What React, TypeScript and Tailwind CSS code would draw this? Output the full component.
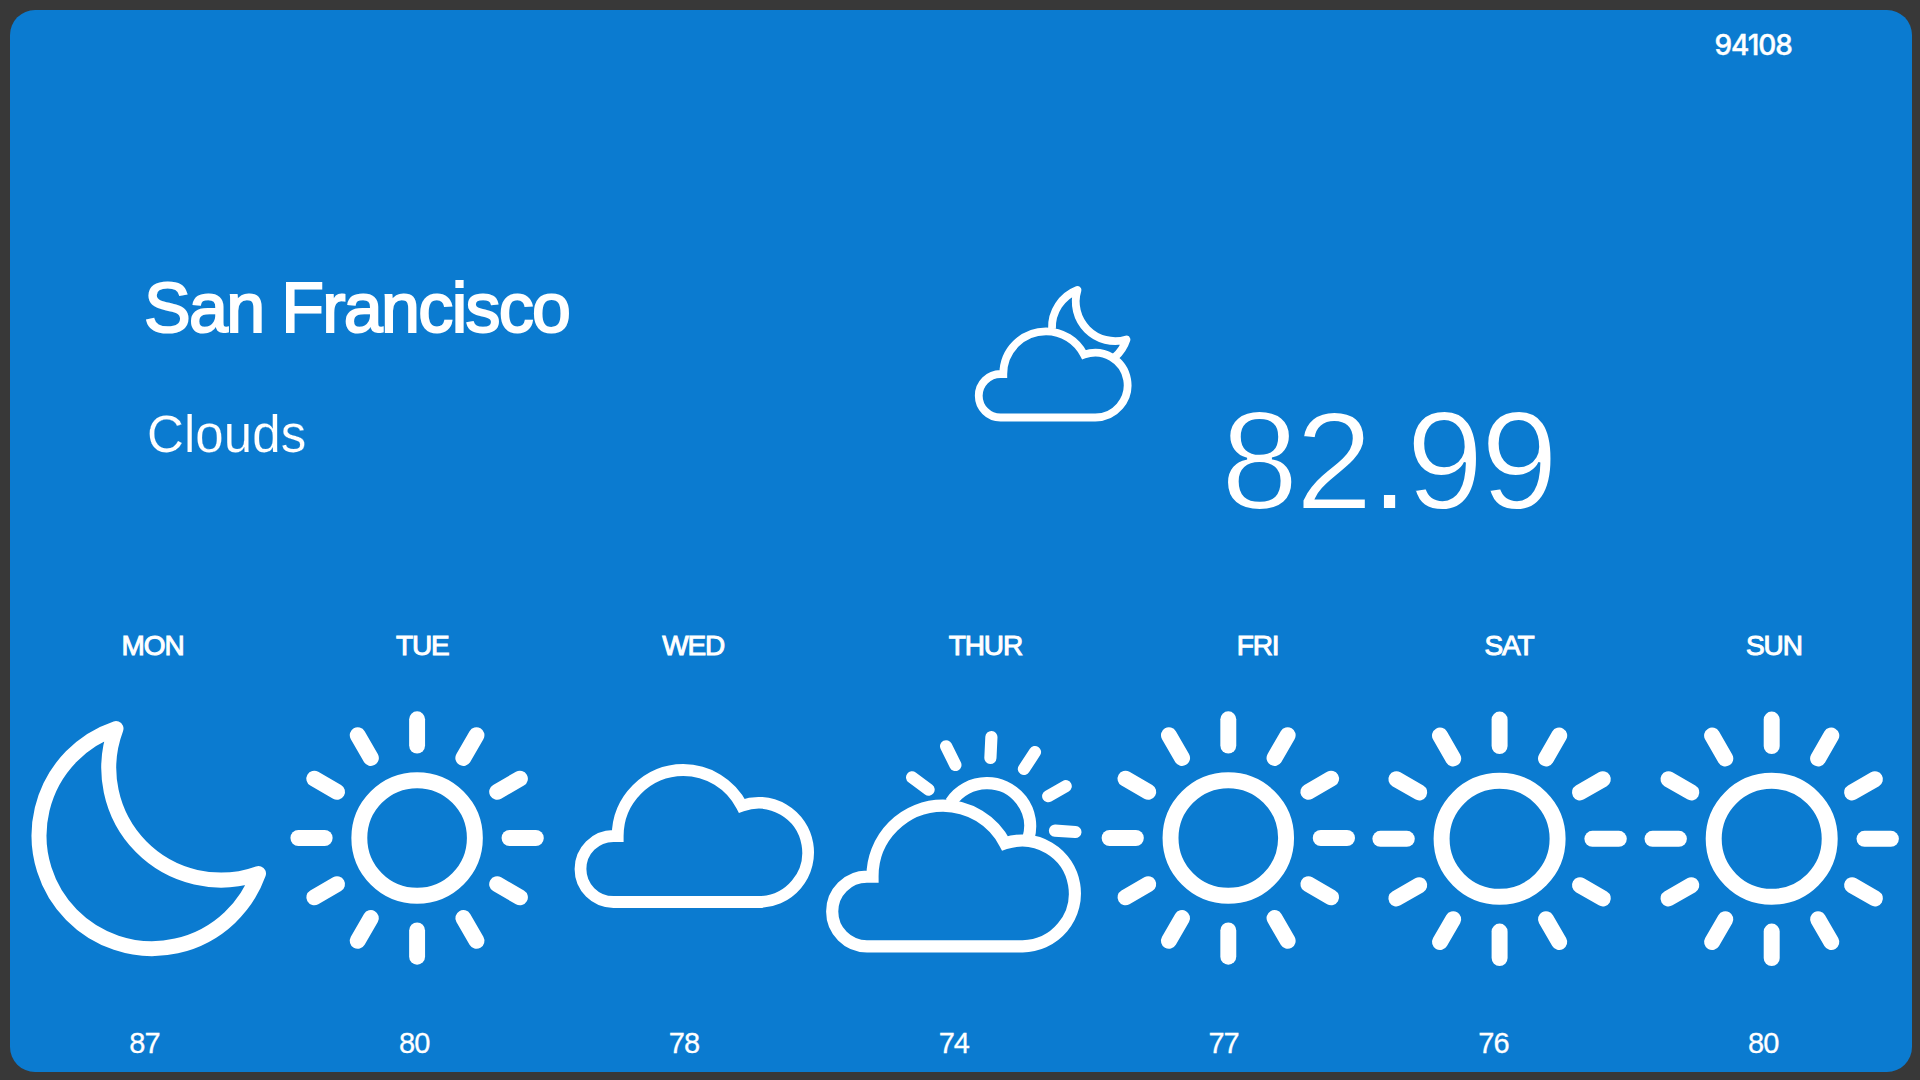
import React from "react";

const RAY_ANGLES = [0, 30, 60, 90, 120, 150, 180, 210, 240, 270, 300, 330];

function Sun({ cx, cy, scale = 0.996 }: { cx: number; cy: number; scale?: number }) {
  return (
    <g transform={`translate(${cx} ${cy}) scale(${scale})`} strokeWidth={16} strokeLinecap="round">
      <circle r={58} />
      {RAY_ANGLES.map((a) => (
        <path key={a} d="M0 -92.8V-119.2" transform={`rotate(${a})`} />
      ))}
    </g>
  );
}

function Moon() {
  return (
    <path
      d="M106 28.5A113 113 0 1 0 248.5 173.5A112 112 0 0 1 106 28.5Z"
      strokeWidth={15}
      strokeLinejoin="round"
    />
  );
}

function Cloud() {
  return (
    <path
      d="M65.7 136A66 66 0 0 1 131.3 70A66 66 0 0 1 189.8 105.7A49.6 49.6 0 1 1 206.5 202H61.5A33 33 0 0 1 61.5 136Z"
      strokeWidth={11.8}
    />
  );
}

function CloudSun() {
  return (
    <g strokeWidth={12.2}>
      <path d="M49.5 176.7A70.6 70.6 0 0 1 120 105.6A70.6 70.6 0 0 1 182 143.3A52.9 52.9 0 1 1 199.6 246.3H44A34.8 34.8 0 0 1 44 176.7Z" />
      <path d="M127.8 102.5A43 43 0 0 1 163.5 83.2A43 43 0 0 1 205.5 138" />
      <path
        d="M89.1 77.3L105.6 89.6M123.1 46.3L132.4 65M168.4 37L167.4 58M212 52L200.9 69M242.7 86.2L225.2 96.2M232 130.7L252.4 132"
        strokeLinecap="round"
      />
    </g>
  );
}

function CloudMoon() {
  return (
    <svg className="h-[170px] w-[220px]" viewBox="0 0 220 170" fill="none" stroke="#fff" strokeWidth={7.8}>
      <path d="M53.3 104A42.7 42.7 0 0 1 96 61.3A42.7 42.7 0 0 1 134 84.7A32.4 32.4 0 1 1 144.6 147.5H50.5A21.75 21.75 0 0 1 50.5 104Z" />
      <path
        d="M102 59A40 40 0 0 1 127.5 20A39.5 39.5 0 0 0 176.5 69.5A40 40 0 0 1 165 87"
        strokeLinejoin="round"
      />
    </svg>
  );
}

const days = [
  { name: "MON", temp: 87, width: "w-[285px]", icon: <Moon /> },
  { name: "TUE", temp: 80, width: "w-[254.6px]", icon: <Sun cx={136.1} cy={138} /> },
  { name: "WED", temp: 78, width: "w-[287.2px]", icon: <Cloud /> },
  { name: "THUR", temp: 74, width: "w-[297.2px]", icon: <CloudSun /> },
  { name: "FRI", temp: 77, width: "w-[247.4px]", icon: <Sun cx={134.3} cy={138} /> },
  { name: "SAT", temp: 76, width: "w-[255.2px]", icon: <Sun cx={134.6} cy={138.8} scale={1} /> },
  { name: "SUN", temp: 80, width: "w-[274.8px]", icon: <Sun cx={135.7} cy={138.8} scale={1} /> },
];

export default function App() {
  return (
    <div className="h-[1080px] w-[1920px] overflow-hidden bg-[#383838] pt-[10px] pl-[10px] font-['Liberation_Sans',sans-serif] text-white">
      <main className="flex h-[1062px] w-[1902px] flex-col overflow-hidden rounded-[25px] bg-[#0b7bd0]">
        <header className="flex h-[250px] justify-end pt-[21px] pr-[120px]">
          <span className="font-['Inter',sans-serif] text-[28px] leading-[28px] font-medium tracking-[-1px] [-webkit-text-stroke:0.4px_#fff]">
            94108
          </span>
        </header>

        <section className="flex h-[371px]">
          <div className="w-[930px] pt-[12px] pl-[134px]">
            <h1 className="text-[70px] leading-[72px] tracking-[-1.7px] whitespace-nowrap [-webkit-text-stroke:2px_#fff]">
              San Francisco
            </h1>
            <p className="mt-[65px] pl-[3px] text-[51px] leading-[51px] tracking-[0.1px] [-webkit-text-stroke:0.2px_#0b7bd0]">
              Clouds
            </p>
          </div>
          <div className="w-[281px] pt-[10px] pl-[10px]">
            <CloudMoon />
          </div>
          <div className="pt-[131px] text-[139px] leading-[139px] tracking-[-2.7px] [-webkit-text-stroke:2px_#0b7bd0]">
            82.99
          </div>
        </section>

        <div className="flex h-[69px] text-[28px] leading-[29px] tracking-[-1.1px] [-webkit-text-stroke:1px_#fff]">
          {days.map((d) => (
            <div key={d.name} className={`shrink-0 text-center ${d.width}`}>
              {d.name}
            </div>
          ))}
        </div>

        <div className="flex h-[329px]">
          {days.map((d) => (
            <svg
              key={d.name}
              className="h-[275px] w-[271px] shrink-0 overflow-visible"
              viewBox="0 0 271 275"
              fill="none"
              stroke="#fff"
            >
              {d.icon}
            </svg>
          ))}
        </div>

        <div className="flex text-[29px] leading-[29px] tracking-[-1px] [-webkit-text-stroke:0.3px_#fff]">
          {days.map((d) => (
            <div key={d.name} className="w-[269.8px] shrink-0 pr-[1px] text-center">
              {d.temp}
            </div>
          ))}
        </div>
      </main>
    </div>
  );
}
